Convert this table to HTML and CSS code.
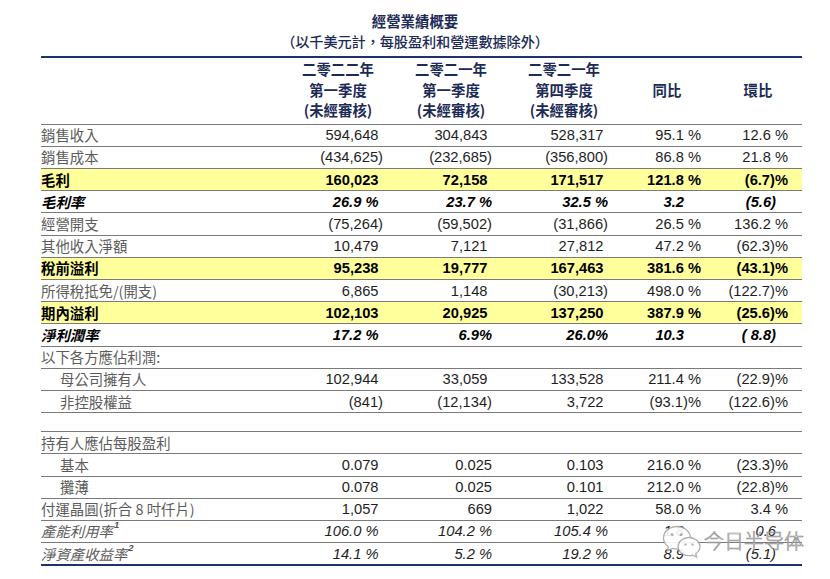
FILE: index.html
```html
<!DOCTYPE html>
<html lang="zh-Hant">
<head>
<meta charset="utf-8">
<title>經營業績概要</title>
<link rel="stylesheet" href="styles.css">
</head>
<body>
<div class="page">
  <div class="title">
    <div class="t1">經營業績概要</div>
    <div class="t2">（以千美元計，每股盈利和營運數據除外）</div>
  </div>

  <div class="tbl">
    <div class="row head">
      <div></div>
      <div class="h">二零二二年<br>第一季度<br>(未經審核)</div>
      <div class="h">二零二一年<br>第一季度<br>(未經審核)</div>
      <div class="h">二零二一年<br>第四季度<br>(未經審核)</div>
      <div class="h">同比</div>
      <div class="h">環比</div>
    </div>

    <div class="row">
      <div class="lbl">銷售收入</div>
      <div class="c p">594,648</div><div class="c p">304,843</div><div class="c p">528,317</div><div class="c">95.1 %</div><div class="c">12.6 %</div>
    </div>
    <div class="row">
      <div class="lbl">銷售成本</div>
      <div class="c">(434,625)</div><div class="c">(232,685)</div><div class="c">(356,800)</div><div class="c">86.8 %</div><div class="c">21.8 %</div>
    </div>
    <div class="row hl">
      <div class="lbl">毛利</div>
      <div class="c p">160,023</div><div class="c p">72,158</div><div class="c p">171,517</div><div class="c">121.8 %</div><div class="c">(6.7)%</div>
    </div>
    <div class="row bi">
      <div class="lbl">毛利率</div>
      <div class="c p">26.9 %</div><div class="c">23.7 %</div><div class="c">32.5 %</div><div class="c d4">3.2</div><div class="c d5">(5.6)</div>
    </div>
    <div class="row">
      <div class="lbl">經營開支</div>
      <div class="c">(75,264)</div><div class="c">(59,502)</div><div class="c">(31,866)</div><div class="c">26.5 %</div><div class="c">136.2 %</div>
    </div>
    <div class="row">
      <div class="lbl">其他收入淨額</div>
      <div class="c p">10,479</div><div class="c p">7,121</div><div class="c p">27,812</div><div class="c">47.2 %</div><div class="c">(62.3)%</div>
    </div>
    <div class="row hl">
      <div class="lbl">稅前溢利</div>
      <div class="c p">95,238</div><div class="c p">19,777</div><div class="c p">167,463</div><div class="c">381.6 %</div><div class="c">(43.1)%</div>
    </div>
    <div class="row">
      <div class="lbl">所得稅抵免/(開支)</div>
      <div class="c p">6,865</div><div class="c p">1,148</div><div class="c">(30,213)</div><div class="c">498.0 %</div><div class="c">(122.7)%</div>
    </div>
    <div class="row hl">
      <div class="lbl">期內溢利</div>
      <div class="c p">102,103</div><div class="c p">20,925</div><div class="c p">137,250</div><div class="c">387.9 %</div><div class="c">(25.6)%</div>
    </div>
    <div class="row bi">
      <div class="lbl">淨利潤率</div>
      <div class="c p">17.2 %</div><div class="c">6.9%</div><div class="c">26.0%</div><div class="c d4">10.3</div><div class="c d5">( 8.8)</div>
    </div>
    <div class="row">
      <div class="lbl">以下各方應佔利潤:</div>
      <div></div><div></div><div></div><div></div><div></div>
    </div>
    <div class="row">
      <div class="lbl ind">母公司擁有人</div>
      <div class="c p">102,944</div><div class="c p">33,059</div><div class="c p">133,528</div><div class="c">211.4 %</div><div class="c">(22.9)%</div>
    </div>
    <div class="row">
      <div class="lbl ind">非控股權益</div>
      <div class="c">(841)</div><div class="c">(12,134)</div><div class="c p">3,722</div><div class="c">(93.1)%</div><div class="c">(122.6)%</div>
    </div>

    <div class="spacer"></div>

    <div class="row">
      <div class="lbl">持有人應佔每股盈利</div>
      <div></div><div></div><div></div><div></div><div></div>
    </div>
    <div class="row">
      <div class="lbl ind">基本</div>
      <div class="c p">0.079</div><div class="c">0.025</div><div class="c p">0.103</div><div class="c">216.0 %</div><div class="c">(23.3)%</div>
    </div>
    <div class="row">
      <div class="lbl ind">攤薄</div>
      <div class="c p">0.078</div><div class="c">0.025</div><div class="c p">0.101</div><div class="c">212.0 %</div><div class="c">(22.8)%</div>
    </div>
    <div class="row">
      <div class="lbl">付運晶圓(折合 8 吋仟片)</div>
      <div class="c p">1,057</div><div class="c">669</div><div class="c p">1,022</div><div class="c">58.0 %</div><div class="c">3.4 %</div>
    </div>
    <div class="row it">
      <div class="lbl">產能利用率<span class="sup">1</span></div>
      <div class="c p">106.0 %</div><div class="c">104.2 %</div><div class="c">105.4 %</div><div class="c d4">1.8</div><div class="c d5">0.6</div>
    </div>
    <div class="row it last">
      <div class="lbl">淨資產收益率<span class="sup">2</span></div>
      <div class="c p">14.1 %</div><div class="c">5.2 %</div><div class="c">19.2 %</div><div class="c d4">8.9</div><div class="c d5">(5.1)</div>
    </div>
  </div>

  <div class="wm">
    <svg class="wm-icon" width="42" height="34" viewBox="0 0 42 34">
      <path d="M16 2.5C8.5 2.5 2.5 7.6 2.5 14c0 3.6 1.9 6.6 4.9 8.7l-1.2 4.2 4.9-2.5c1.6.5 3.2.8 4.9.8 7.5 0 13.5-5.1 13.5-11.2S23.5 2.5 16 2.5z" fill="#fff" stroke="#a8a8a8" stroke-width="1.3"/>
      <path d="M28 13.5c-6.1 0-11 4.1-11 9.1s4.9 9.1 11 9.1c1.3 0 2.6-.2 3.8-.6l3.9 2-1-3.4c2.5-1.7 4.3-4.2 4.3-7.1 0-5-4.9-9.1-11-9.1z" fill="#fff" stroke="#a8a8a8" stroke-width="1.3"/>
      <circle cx="11" cy="10.5" r="1.5" fill="#b0b0b0"/>
      <circle cx="20" cy="10.5" r="1.5" fill="#b0b0b0"/>
      <circle cx="24.5" cy="20.5" r="1.2" fill="#b0b0b0"/>
      <circle cx="31.5" cy="20.5" r="1.2" fill="#b0b0b0"/>
    </svg>
    <span class="wm-text">今日半导体</span>
  </div>
</div>
</body>
</html>
```
FILE: styles.css
```css
html, body {
  margin: 0;
  padding: 0;
  background: #ffffff;
}

body {
  font-family: "Liberation Sans", "Noto Sans CJK TC", sans-serif;
  color: #1e1e1e;
}

.page {
  position: relative;
  width: 830px;
  height: 579px;
  overflow: hidden;
}

.title {
  box-sizing: border-box;
  height: 56px;
  padding-top: 11px;
  text-align: center;
  color: #1c2a56;
  font-family: "Noto Sans CJK TC", sans-serif;
}

.t1 {
  font-size: 14.4px;
  line-height: 20px;
  font-weight: 700;
}

.t2 {
  font-size: 14.2px;
  line-height: 20px;
  font-weight: 500;
  letter-spacing: -0.1px;
}

.tbl {
  margin-left: 41px;
  width: 761px;
  border-top: 2px solid #1f3466;
}

.row {
  display: grid;
  grid-template-columns: 252px 117px 110px 113px 95px 74px;
  align-items: center;
  box-sizing: border-box;
  height: 22.2px;
  border-bottom: 1px solid #7a7a7a;
  font-size: 14.7px;
}

.row > :nth-child(2) { padding-right: 27px; }
.row > :nth-child(3) { padding-right: 28px; }
.row > :nth-child(4) { padding-right: 25px; }
.row > :nth-child(5) { padding-right: 27px; }
.row > :nth-child(6) { padding-right: 14px; }

.head {
  height: auto;
  padding: 1px 0 3.2px;
}

.h {
  text-align: center;
  font-family: "Noto Sans CJK TC", sans-serif;
  font-weight: 700;
  font-size: 14.4px;
  line-height: 20.5px;
  color: #1c2a56;
}

.lbl {
  font-family: "Noto Sans CJK TC", sans-serif;
  font-size: 14.4px;
  line-height: 20px;
  color: #5c5c5c;
  white-space: nowrap;
}

.lbl.ind {
  padding-left: 19px;
}

.sup {
  display: inline-block;
  font-family: "Liberation Sans", sans-serif;
  font-size: 9.5px;
  font-weight: 700;
  line-height: 10px;
  vertical-align: top;
  margin-top: -1px;
  margin-left: 1px;
  color: #555;
}

.c {
  text-align: right;
  line-height: 20px;
  white-space: nowrap;
  color: #1e1e1e;
}

.row > .c.p:nth-child(2) { padding-right: 31.5px; }
.row > .c.p:nth-child(3) { padding-right: 32.5px; }
.row > .c.p:nth-child(4) { padding-right: 29.5px; }

.row > .c.d4 { padding-right: 44px; }
.row > .c.d5 { padding-right: 26px; }

.hl {
  background: #ffff9c;
}

.hl .lbl {
  color: #000;
  font-weight: 700;
}

.hl .c {
  color: #000;
  font-weight: 700;
}

.bi .lbl,
.bi .c {
  color: #000;
  font-weight: 700;
  font-style: italic;
}

.it .lbl,
.it .c {
  font-style: italic;
}

.row.last {
  height: 23px;
  border-bottom: 2px solid #1f3466;
}

.spacer {
  height: 19px;
  box-sizing: border-box;
  border-bottom: 1px solid #7a7a7a;
}

.wm {
  position: absolute;
  left: 661px;
  top: 524px;
  display: flex;
  align-items: center;
  gap: 1px;
  opacity: 0.9;
}

.wm-icon {
  display: block;
}

.wm-text {
  font-family: "Noto Sans CJK SC", sans-serif;
  font-size: 20px;
  font-weight: 300;
  line-height: 24px;
  color: #ffffff;
  -webkit-text-stroke: 0.7px #8c8c8c;
}
```
